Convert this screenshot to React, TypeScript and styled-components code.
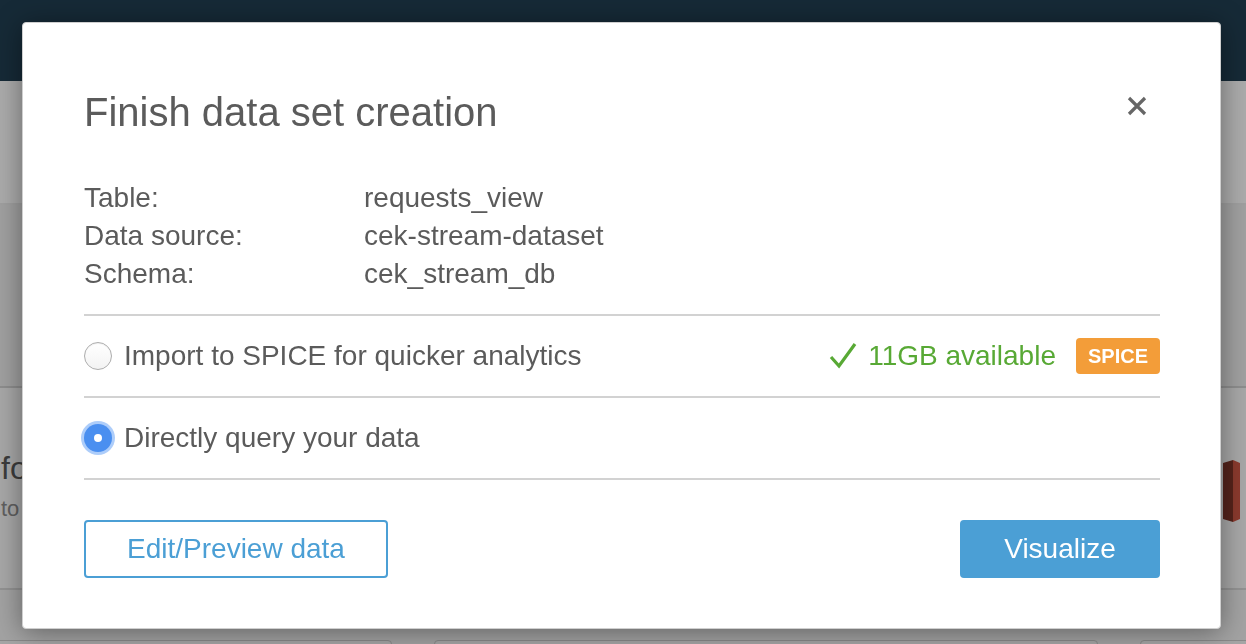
import React from "react";
import styled, { createGlobalStyle } from "styled-components";

const Global = createGlobalStyle`
  html, body { margin: 0; padding: 0; }
  body {
    width: 1246px;
    height: 644px;
    overflow: hidden;
    background: #a8a8a8;
    font-family: "Liberation Sans", Arial, Helvetica, sans-serif;
  }
`;

const Page = styled.div`
  display: flex;
  flex-direction: column;
  height: 644px;
  overflow: hidden;
`;

const Nav = styled.div`
  height: 81px;
  flex: none;
  background: #162a37;
`;

const Band = styled.div<{ $h: number; $bg: string; $line?: string }>`
  height: ${(p) => p.$h}px;
  flex: none;
  background: ${(p) => p.$bg};
  border-bottom: ${(p) => (p.$line ? `2px solid ${p.$line}` : "none")};
  box-sizing: border-box;
`;

const InfoBand = styled(Band)`
  display: flex;
  justify-content: space-between;
  align-items: flex-start;
`;

const BgText = styled.div`
  display: flex;
  flex-direction: column;
  padding-top: 60px;
  padding-left: 1px;
`;

const BgHeading = styled.div`
  font-size: 32px;
  line-height: 40px;
  color: #3c3c3c;
`;

const BgSub = styled.div`
  font-size: 22px;
  line-height: 30px;
  color: #606060;
  margin-top: 6px;
`;

const BarArt = styled.svg`
  margin-top: 72px;
  margin-right: 5px;
`;

const CardRow = styled.div`
  display: flex;
  gap: 42px;
  padding-top: 50px;
  margin-left: -10px;
`;

const BgCard = styled.div<{ $w: number }>`
  width: ${(p) => p.$w}px;
  height: 40px;
  flex: none;
  border: 1px solid #8a8a8a;
  border-radius: 4px;
  background: #a6a6a6;
`;

const Modal = styled.div`
  position: fixed;
  left: 22px;
  top: 22px;
  width: 1199px;
  height: 607px;
  box-sizing: border-box;
  background: #ffffff;
  border: 1px solid #cfcfcf;
  border-radius: 4px;
  box-shadow: 0 3px 28px rgba(0, 0, 0, 0.42);
  padding: 65px 60px 0 61px;
  color: #5b5b5b;
  display: flex;
  flex-direction: column;
`;

const Header = styled.div`
  display: flex;
  justify-content: space-between;
  align-items: flex-start;
`;

const Title = styled.h1`
  margin: 0;
  font-size: 40px;
  line-height: 48px;
  font-weight: 400;
  color: #5b5b5b;
`;

const CloseButton = styled.button`
  width: 22px;
  height: 22px;
  margin: 7px 12px 0 0;
  padding: 0;
  border: none;
  background: transparent;
  display: flex;
  align-items: center;
  justify-content: center;
  cursor: pointer;
`;

const Details = styled.div`
  display: grid;
  grid-template-columns: 280px 1fr;
  margin-top: 43px;
  font-size: 28px;
  line-height: 38px;
`;

const Divider = styled.div`
  height: 2px;
  background: #d2d2d2;
`;

const FirstDivider = styled(Divider)`
  margin-top: 21px;
`;

const OptionRow = styled.div`
  height: 80px;
  display: flex;
  align-items: center;
  font-size: 28px;
`;

const Radio = styled.span<{ $checked?: boolean }>`
  width: 28px;
  height: 28px;
  flex: none;
  box-sizing: border-box;
  border-radius: 50%;
  margin-right: 12px;
  display: flex;
  align-items: center;
  justify-content: center;
  border: ${(p) => (p.$checked ? "none" : "1px solid #adadad")};
  background: ${(p) =>
    p.$checked ? "#4a8ff0" : "linear-gradient(#ffffff, #f3f3f3)"};
  box-shadow: ${(p) =>
    p.$checked
      ? "0 0 0 3px rgba(92, 156, 245, 0.5)"
      : "inset 0 1px 1px rgba(0,0,0,0.06)"};
`;

const RadioDot = styled.span`
  width: 8px;
  height: 8px;
  border-radius: 50%;
  background: #ffffff;
`;

const OptionLabel = styled.span`
  flex: 1;
  color: #5b5b5b;
`;

const Available = styled.span`
  display: flex;
  align-items: center;
  color: #58a935;
  gap: 11px;
`;

const Badge = styled.span`
  margin-left: 20px;
  height: 36px;
  padding: 0 12px;
  display: flex;
  align-items: center;
  background: #f39d39;
  color: #ffffff;
  border-radius: 4px;
  font-size: 20px;
  font-weight: 700;
`;

const Footer = styled.div`
  display: flex;
  justify-content: space-between;
  margin-top: 40px;
`;

const Button = styled.button<{ $primary?: boolean }>`
  height: 58px;
  width: ${(p) => (p.$primary ? "200px" : "304px")};
  box-sizing: border-box;
  border-radius: 4px;
  font-family: "Liberation Sans", Arial, Helvetica, sans-serif;
  font-size: 28px;
  cursor: pointer;
  border: 2px solid #4b9fd5;
  background: ${(p) => (p.$primary ? "#4b9fd5" : "#ffffff")};
  color: ${(p) => (p.$primary ? "#ffffff" : "#4b9fd5")};
`;

export default function App() {
  return (
    <>
      <Global />
      <Page>
        <Nav />
        <Band $h={124} $bg="#acacac" $line="#a0a0a0" />
        <Band $h={183} $bg="#a1a1a1" $line="#8e8e8e" />
        <InfoBand $h={202} $bg="#a8a8a8" $line="#939393">
          <BgText>
            <BgHeading>fo</BgHeading>
            <BgSub>to</BgSub>
          </BgText>
          <BarArt width="18" height="62" viewBox="0 0 18 62">
            <polygon points="0,3 10,0 10,62 0,59" fill="#55231b" />
            <polygon points="10,0 17,3 17,59 10,62" fill="#8b3a2e" />
          </BarArt>
        </InfoBand>
        <Band $h={54} $bg="#a3a3a3">
          <CardRow>
            <BgCard $w={400} />
            <BgCard $w={662} />
            <BgCard $w={200} />
          </CardRow>
        </Band>
      </Page>

      <Modal role="dialog" aria-label="Finish data set creation">
        <Header>
          <Title>Finish data set creation</Title>
          <CloseButton aria-label="Close">
            <svg width="20" height="20" viewBox="0 0 20 20">
              <path
                d="M2 2 L18 18 M18 2 L2 18"
                stroke="#666666"
                strokeWidth="3.2"
                strokeLinecap="butt"
              />
            </svg>
          </CloseButton>
        </Header>

        <Details>
          <span>Table:</span>
          <span>requests_view</span>
          <span>Data source:</span>
          <span>cek-stream-dataset</span>
          <span>Schema:</span>
          <span>cek_stream_db</span>
        </Details>

        <FirstDivider />
        <OptionRow>
          <Radio />
          <OptionLabel>Import to SPICE for quicker analytics</OptionLabel>
          <Available>
            <svg width="28" height="26" viewBox="0 0 28 26">
              <path
                d="M2 14 L10 23 L26 1"
                fill="none"
                stroke="#58a935"
                strokeWidth="3.2"
              />
            </svg>
            11GB available
          </Available>
          <Badge>SPICE</Badge>
        </OptionRow>
        <Divider />
        <OptionRow>
          <Radio $checked>
            <RadioDot />
          </Radio>
          <OptionLabel>Directly query your data</OptionLabel>
        </OptionRow>
        <Divider />

        <Footer>
          <Button>Edit/Preview data</Button>
          <Button $primary>Visualize</Button>
        </Footer>
      </Modal>
    </>
  );
}
